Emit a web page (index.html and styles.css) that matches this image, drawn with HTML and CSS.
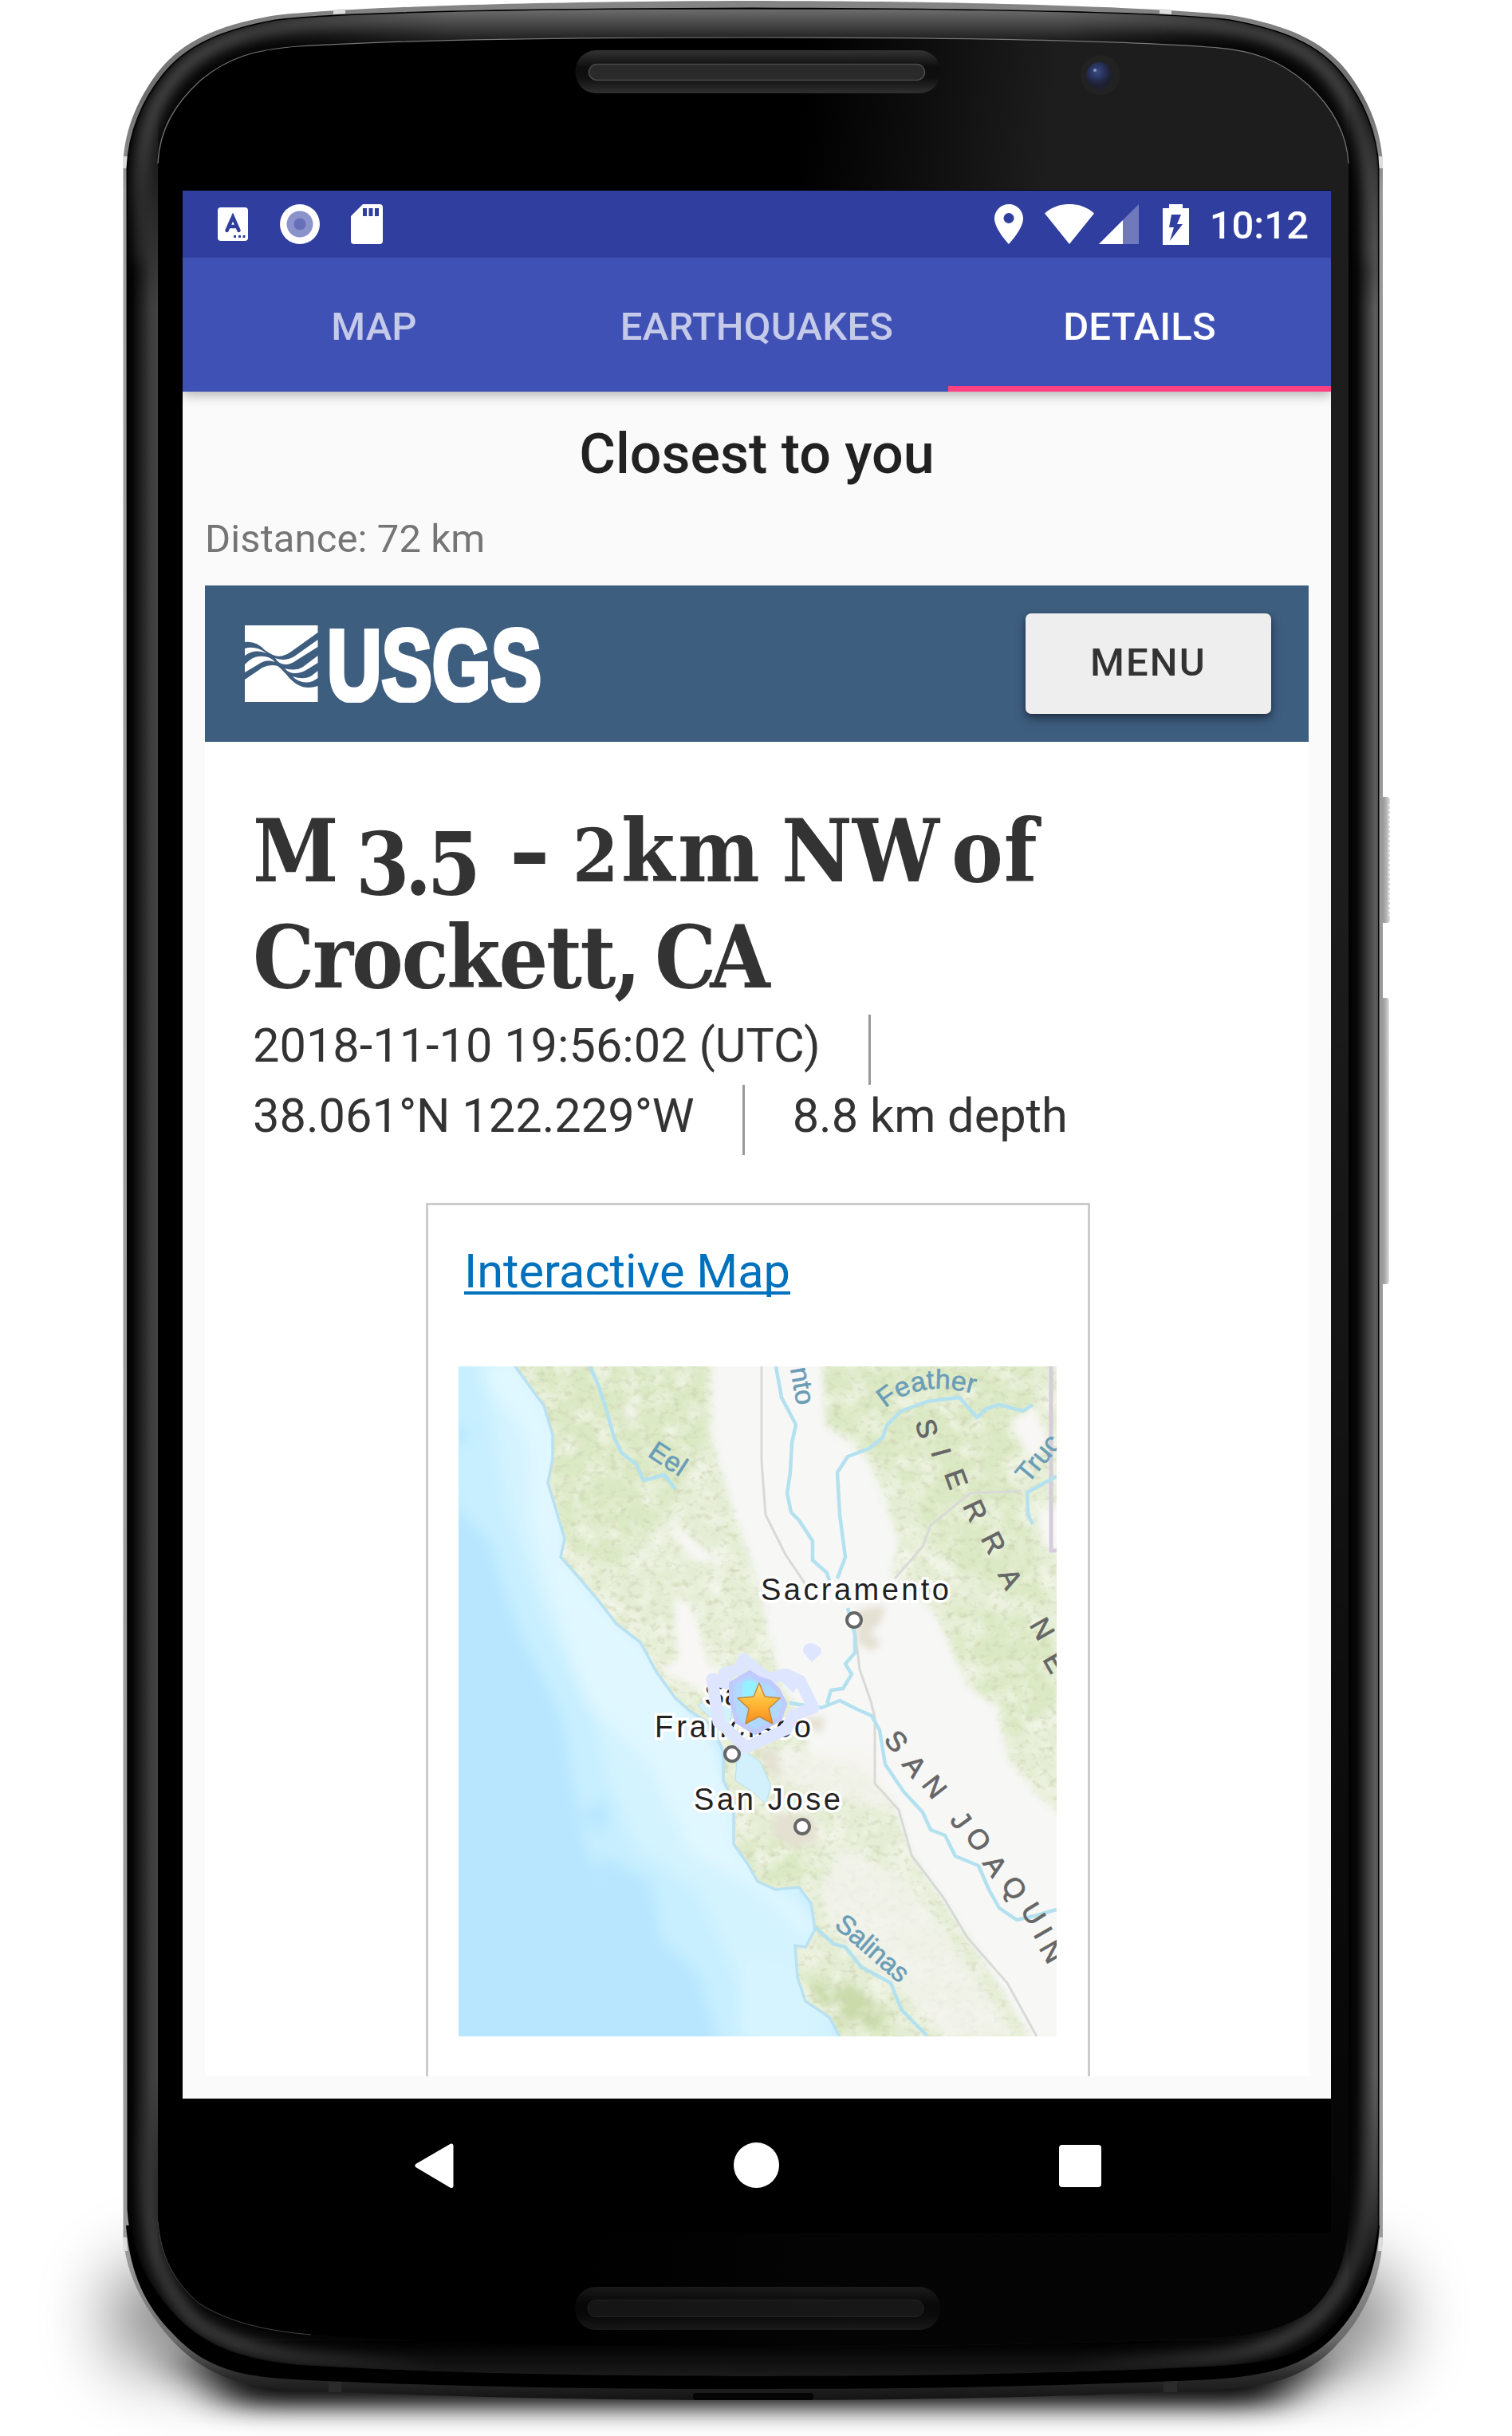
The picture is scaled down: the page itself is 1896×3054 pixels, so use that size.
FILE: index.html
```html
<!DOCTYPE html>
<html lang="en">
<head>
<meta charset="utf-8">
<title>Closest to you</title>
<link rel="stylesheet" href="styles.css">
</head>
<body>
<div class="stage">
  <svg class="device" viewBox="0 0 1896 3054" width="1896" height="3054" aria-hidden="true">
    <defs>
      <path id="shell" d="M154.500 205C156 160 175 120 200 88C230 50 275 32 340 20C400 12 600 2 944 1C1290 2 1490 12 1549 20C1613 32 1658 50 1688 88C1713 120 1732 160 1734 205V2805C1731 2860 1710 2905 1676 2940C1640 2980 1590 2993 1525 2996C1300 3007 1100 3009 944 3009C790 3009 590 3007 363 2996C300 2993 252 2975 212 2930C178 2890 158 2850 154.500 2805Z"/>
      <path id="bezel" d="M160 210C162 165 180 125 205 94C235 56 280 38 345 26C405 18 600 12 944 11C1290 12 1485 18 1543 26C1608 38 1654 56 1683 94C1708 125 1726 165 1728 210V2790C1722 2850 1700 2890 1665 2925C1630 2957 1580 2964 1510 2967C1300 2977 1100 2979 944 2979C790 2979 590 2977 376 2965C310 2959 262 2945 222 2905C186 2866 165 2830 161 2770Z"/>
      <path id="glass" d="M198 205C200 160 222 128 250 102C285 72 320 62 375 58C500 50 700 47 944 47C1190 47 1390 50 1515 59C1570 62 1605 75 1640 106C1668 132 1689 165 1691 205V2790C1687 2845 1665 2880 1640 2900C1600 2925 1560 2930 1500 2932C1300 2940 1100 2942 944 2942C790 2942 580 2940 390 2927C330 2922 285 2910 250 2888C218 2860 202 2830 198 2785Z"/>
      <clipPath id="bezelClip"><use href="#bezel"/></clipPath>
      <linearGradient id="rim" x1="0" y1="0" x2="0" y2="1">
        <stop offset="0" stop-color="#858585"/><stop offset=".04" stop-color="#6e6e6e"/><stop offset=".08" stop-color="#9a9a9a"/>
        <stop offset=".94" stop-color="#9a9a9a"/><stop offset=".975" stop-color="#6a6a6a"/><stop offset=".99" stop-color="#2a2a2a"/><stop offset="1" stop-color="#141414"/>
      </linearGradient>
      <linearGradient id="leftEdge"><stop offset="0" stop-color="#000"/><stop offset=".15" stop-color="#050505"/><stop offset=".75" stop-color="#3c3c3c"/><stop offset="1" stop-color="#434343"/></linearGradient>
      <linearGradient id="rightEdge"><stop offset="0" stop-color="#000"/><stop offset=".3" stop-color="#0a0a0a"/><stop offset=".9" stop-color="#5e5e5e"/><stop offset="1" stop-color="#555"/></linearGradient>
      <linearGradient id="topEdge" x1="0" y1="0" x2="0" y2="1"><stop offset="0" stop-color="#6c6c6c"/><stop offset="1" stop-color="#060606"/></linearGradient>
      <linearGradient id="bottomEdge" x1="0" y1="0" x2="0" y2="1"><stop offset="0" stop-color="#000"/><stop offset="1" stop-color="#1b1b1b"/></linearGradient>
      <linearGradient id="endFade" gradientUnits="userSpaceOnUse" x1="0" y1="110" x2="0" y2="2880"><stop offset="0" stop-color="#000"/><stop offset=".1" stop-color="#fff"/><stop offset=".9" stop-color="#fff"/><stop offset="1" stop-color="#000"/></linearGradient>
      <linearGradient id="sideFade" gradientUnits="userSpaceOnUse" x1="300" y1="0" x2="1590" y2="0"><stop offset="0" stop-color="#000"/><stop offset=".2" stop-color="#fff"/><stop offset=".8" stop-color="#fff"/><stop offset="1" stop-color="#000"/></linearGradient>
      <mask id="endMask" maskUnits="userSpaceOnUse" x="0" y="0" width="1896" height="3054"><rect width="1896" height="3054" fill="url(#endFade)"/></mask>
      <mask id="sideMask" maskUnits="userSpaceOnUse" x="0" y="0" width="1896" height="3054"><rect width="1896" height="3054" fill="url(#sideFade)"/></mask>
      <linearGradient id="sheen" gradientUnits="userSpaceOnUse" x1="1020" y1="0" x2="1330" y2="30"><stop offset="0" stop-color="#000"/><stop offset="1" stop-color="#1d1d1d"/></linearGradient>
      <linearGradient id="fade" x1="0" y1="0" x2="0" y2="1"><stop offset=".35" stop-color="#000" stop-opacity="0"/><stop offset=".95" stop-color="#000" stop-opacity=".85"/></linearGradient>
      <linearGradient id="slot" x1="0" y1="0" x2="0" y2="1"><stop offset="0" stop-color="#333"/><stop offset=".4" stop-color="#0d0d0d"/><stop offset=".65" stop-color="#101010"/><stop offset="1" stop-color="#303030"/></linearGradient>
      <linearGradient id="button"><stop offset="0" stop-color="#8a8a8a"/><stop offset=".6" stop-color="#b5b5b5"/><stop offset="1" stop-color="#e0e0e0"/></linearGradient>
      <radialGradient id="lens" cx=".4" cy=".35"><stop offset="0" stop-color="#3d4d80"/><stop offset=".5" stop-color="#283460"/><stop offset="1" stop-color="#1e2030"/></radialGradient>
      <filter id="soft" filterUnits="userSpaceOnUse" x="100" y="-50" width="1700" height="3100"><feGaussianBlur stdDeviation="9"/></filter>
      <filter id="castWide" x="-20%" y="-90%" width="140%" height="280%"><feGaussianBlur stdDeviation="46 48"/></filter>
      <filter id="castTight" x="-20%" y="-200%" width="140%" height="500%"><feGaussianBlur stdDeviation="34 15"/></filter>
    </defs>
    <rect x="140" y="2850" width="1610" height="110" rx="50" fill="#000" opacity=".58" filter="url(#castWide)"/>
    <path d="M230 2950H1660L1600 3018H290Z" fill="#000" opacity=".95" filter="url(#castTight)"/>
    <rect x="1732" y="999" width="11" height="158" rx="4" fill="url(#button)"/>
    <path d="M1743 1008V1148" stroke="#fff" stroke-width="3" stroke-dasharray="3 3"/>
    <rect x="1732" y="1251" width="10" height="359" rx="4" fill="url(#button)"/>
    <use href="#shell" fill="url(#rim)"/>
    <path d="M418 12l15-1v6l-15 1zM1454 11l15 1v6l-15-1zM154 196h6v15h-6zM1729 196h5v15h-5zM154 2805h5l1 17h-5zM1729 2805h5l-1 17h-5z" fill="#ddd"/>
    <path d="M412 2983h16v16h-16zM1459 2983h17v16h-17z" fill="#2b2b2b"/>
    <path d="M158 2790C163 2850 182 2890 216 2925C258 2970 300 2979 366 2983C590 2994 790 2995 944 2995C1100 2995 1300 2993 1522 2983C1590 2978 1635 2968 1674 2928C1706 2895 1726 2850 1730 2790Z" fill="#000"/>
    <rect x="869" y="3000" width="151" height="9" rx="4" fill="#050505"/>
    <use href="#bezel" fill="#050505" stroke="#000" stroke-width="3"/>
    <g clip-path="url(#bezelClip)">
      <path d="M174 330V250C174 160 200 110 240 76C280 45 330 34 400 28C600 18 1290 18 1490 28C1560 34 1610 45 1650 76C1690 110 1714 160 1717 250V330" fill="none" stroke="#6a6a6a" stroke-width="12" filter="url(#soft)"/>
      <path d="M182 2600V2700C184 2830 210 2880 250 2915C290 2940 330 2950 400 2957L560 2968M1330 2968L1490 2957C1560 2954 1610 2940 1650 2906C1695 2860 1712 2820 1716 2700V2600" fill="none" stroke="#555" stroke-width="13" filter="url(#soft)"/>
      <g mask="url(#endMask)">
        <rect x="160" y="100" width="38" height="2780" fill="url(#leftEdge)"/>
        <rect x="1691" y="100" width="37" height="2780" fill="url(#rightEdge)"/>
      </g>
      <g mask="url(#sideMask)">
        <rect x="300" y="12" width="1290" height="50" fill="url(#topEdge)"/>
        <rect x="300" y="2935" width="1290" height="44" fill="url(#bottomEdge)"/>
      </g>
    </g>
    <use href="#glass" fill="url(#sheen)"/>
    <use href="#glass" fill="url(#fade)"/>
    <path d="M198 205C200 160 222 128 250 102C285 72 320 62 375 58C500 50 700 47 944 47C1190 47 1390 50 1515 59C1570 62 1605 75 1640 106C1668 132 1689 165 1691 205" fill="none" stroke="#777" stroke-width="1.200"/>
    <path d="M198 2785C202 2830 218 2860 250 2888C285 2910 330 2922 390 2927" fill="none" stroke="#444"/>
    <rect x="721.500" y="63" width="457.500" height="54" rx="26" fill="url(#slot)"/>
    <rect x="738.500" y="80.500" width="421" height="20" rx="10" fill="#2a2a2a" stroke="#4a4a4a" stroke-width="1.500"/>
    <g opacity=".5">
      <rect x="721" y="2867" width="458" height="54" rx="26" fill="url(#slot)"/>
      <rect x="737" y="2883.500" width="421" height="21" rx="10" fill="#2a2a2a" stroke="#444"/>
    </g>
    <circle cx="1380" cy="94" r="25" fill="#222"/>
    <circle cx="1379" cy="95" r="17" fill="url(#lens)"/>
    <circle cx="1373" cy="88" r="2" fill="#8593c0"/>
  </svg>

  <main class="screen">
    <div class="status-bar">
      <div class="status-group">
        <svg class="ic-keyboard" viewBox="0 0 38 42"><rect width="38" height="42" rx="4" fill="#fff"/><path d="M11.500 29L19 12L26.500 29M14.500 24H23.500" fill="none" stroke="#303f9f" stroke-width="4.500" stroke-linecap="round"/><path d="M20 35h3v3h-3zM26 35h3v3h-3zM31.500 35h3v3h-3z" fill="#303f9f"/></svg>
        <svg class="ic-sync" viewBox="0 0 50 50"><circle cx="25" cy="25" r="25" fill="#fff"/><circle cx="25" cy="25" r="16.500" fill="#8b93cb"/><circle cx="25" cy="25" r="7.500" fill="#666fb7"/></svg>
        <svg class="ic-card" viewBox="0 0 40 50"><path d="M15 0H36Q40 0 40 4V46Q40 50 36 50H4Q0 50 0 46V15Z" fill="#fff"/><path d="M15 5h5v10h-5zM22.500 5h5v10h-5zM30 5h5v10h-5z" fill="#303f9f"/></svg>
      </div>
      <div class="status-group status-right">
        <svg class="ic-pin" viewBox="0 0 36 50"><path fill="#fff" fill-rule="evenodd" d="M18 0C8 0 0 8 0 18C0 31 18 50 18 50S36 31 36 18C36 8 28 0 18 0ZM18 24A6.500 6.500 0 1 1 18 11A6.500 6.500 0 0 1 18 24Z"/></svg>
        <svg class="ic-wifi" viewBox="0 0 62 50"><path fill="#fff" d="M31 50L0 11.500C17-4 45-4 62 11.500Z"/></svg>
        <svg class="ic-signal" viewBox="0 0 50 50"><path d="M0 50L50 0V50Z" fill="#7179bd"/><path d="M0 50L30 20V50Z" fill="#fff"/></svg>
        <svg class="ic-battery" viewBox="0 0 33 51"><path fill="#fff" d="M8 0H25V5H33V51H0V5H8Z"/><path fill="#303f9f" d="M11 13H23L18 25H25L9 46L14 29H8Z"/></svg>
        <span class="clock">10:12</span>
      </div>
    </div>
    <nav class="tabs">
      <span class="tab">MAP</span>
      <span class="tab">EARTHQUAKES</span>
      <span class="tab active">DETAILS</span>
    </nav>
    <section class="content">
      <h2 class="title">Closest to you</h2>
      <p class="distance">Distance: 72 km</p>
      <div class="web">
        <header class="web-header">
          <svg class="logo" viewBox="0 0 372 98" role="img">
            <g fill="#fff">
              <path d="M0 1H91.500V10L58 34Q45 43 35 38Q29 35 25 32Q14 20 0 22Z"/>
              <path d="M0 30Q14 26 27 36Q13 30 0 39Z"/>
              <path d="M0 50Q10 40 17 40Q30 38 38 47Q28 43 20 48L0 60Z"/>
              <path d="M0 69L22 54Q32 49 41 52C52 59 60 79 80 79Q86 79 91.500 77V97H0Z"/>
              <path d="M91.500 19L62 40Q50 47 38 42Q43 50 51 50Q58 50 66 44L91.500 28Z"/>
              <path d="M91.500 39L73 53Q64 59 50 55Q55 61 63 61Q70 61 77 57L91.500 48Z"/>
              <path d="M91.500 58L84 64Q74 70 60 65Q66 72 76 72.500Q84 73 91.500 67Z"/>
            </g>
            <text x="103" y="95" class="logo-text" textLength="269" lengthAdjust="spacingAndGlyphs">USGS</text>
          </svg>
          <button class="menu">MENU</button>
        </header>
        <h1 class="quake"><span class="w1">M</span><span class="w2">3.5</span><span class="w3">-</span><span class="w4"><span class="small">2</span>km</span><span class="w5">NW</span><span class="w6">of</span><br><span class="w7">Crockett,</span><span class="w8">CA</span></h1>
        <ul class="meta">
          <li>2018-11-10 19:56:02 (UTC)</li>
          <li>38.061°N 122.229°W</li>
          <li>8.8 km depth</li>
        </ul>
        <div class="card">
          <a class="map-link">Interactive Map</a>
          <svg class="map" viewBox="0 0 750 840">
            <defs>
              <path id="land" d="M68-4L92 29L107 49L118 86V116L112 146L122 179L133 216L128 239L152 266L175 293L198 323L228 346L248 383L272 416L290 432L318 450L332 483V519L345 546V599L362 623L375 646L398 656L427 653L442 673L447 706L435 728L422 726L425 766L435 796L465 816L480 844H756V-4Z"/>
              <clipPath id="landClip"><use href="#land"/></clipPath>
              <filter id="haze" x="-20%" y="-20%" width="140%" height="140%"><feGaussianBlur stdDeviation="9"/></filter>
              <filter id="haze2"><feGaussianBlur stdDeviation="5"/></filter>
              <filter id="relief" x="0" y="0" width="100%" height="100%"><feTurbulence type="fractalNoise" baseFrequency=".1 .13" numOctaves="3" seed="7"/><feColorMatrix values="0 0 0 0 .6  0 0 0 0 .64  0 0 0 0 .44  2.600 0 0 0 -1.350"/></filter>
              <filter id="pale" x="0" y="0" width="100%" height="100%"><feTurbulence type="fractalNoise" baseFrequency=".035 .035" numOctaves="3" seed="21"/><feColorMatrix values="0 0 0 0 .97  0 0 0 0 .97  0 0 0 0 .94  2 0 0 0 -.850"/></filter>
              <linearGradient id="starFill" x1="0" y1="0" x2="0" y2="1"><stop offset="0" stop-color="#ffe08a"/><stop offset=".45" stop-color="#ffbd3a"/><stop offset="1" stop-color="#f98a1c"/></linearGradient>
              <path id="featherPath" d="M535 53Q580 13 655 37"/>
            </defs>
            <rect width="750" height="840" fill="#b8e6ff"/>
            <g filter="url(#haze)">
              <path fill="#c8efff" d="M-20-20H150V300L330 520L480 740V860H330L300 760L255 720L240 640L175 650L150 560L130 440L80 340L60 290L40 220L-20 160Z"/>
              <path fill="#d3f3ff" d="M20-20H160V300L380 560L470 720V860H370L350 770L300 660L220 600L190 530L170 440L100 300L60 180L40 60Z"/>
              <path fill="#e0f7ff" d="M70-20L130 100V240L240 350L330 480L345 600L400 660L440 690V720L380 660L290 610L240 500L160 420L120 300L90 200L85 90L30 10Z"/>
              <path fill="#b8e6ff" d="M-20 70L20 82L-20 110ZM150 560L190 540L185 590ZM180 610L245 650L220 670L170 640Z"/>
              <path fill="#d6f4ff" d="M360 740L440 760V840H350Z"/>
            </g>
            <use href="#land" fill="#e5eed5"/>
            <g clip-path="url(#landClip)">
              <g filter="url(#haze2)">
                <path fill="#dce9c5" d="M70 0H310V90L260 180L200 250L140 230ZM450 0H720V70L690 130L740 300L650 280L600 230L560 150L500 90L460 70ZM430 760L470 765L545 810V840H470ZM350 600L420 590L460 640L380 650ZM620 300L750 320V420L690 470L620 380Z"/>
                <path fill="#cbdcab" d="M440 776L480 768L530 800V830L480 825Z"/>
              </g>
              <rect width="750" height="840" filter="url(#pale)" opacity=".7"/>
              <rect width="750" height="840" filter="url(#relief)" opacity=".8"/>
              <g filter="url(#haze2)">
                <path fill="#f7f7f6" d="M318-10H456L460 75L484 90L515 119L535 173L552 219L542 260L595 306L618 353L640 403L675 426L688 490L722 533L760 566V850H722L645 723L568 613L542 540L500 500L440 490L430 440L405 400L372 260L335 150L318 86Z"/>
                <path fill="#f8f7f5" d="M205 45l18 10-6 20zM260 190l50 40 20 20-40-8zM270 290l20 5 25 80-40 5zM725 185L760 170V235L735 228ZM690 70l30-20 20 40-20 30zM250 380l40-20 40 20-20 30z"/>
                <path fill="#f5f4ef" opacity=".7" d="M480 600L560 640L700 840H610L560 790L480 720L450 660ZM400 480L520 480L545 560L470 540L400 520Z"/>
              </g>
              <g fill="#e4e0d2" filter="url(#haze2)"><path d="M500 305l35-5-5 20-15 15 15 10-10 12-20-10zM395 560l50 5 5 30-30 8-25-15zM375 480l20 0 10 30-10 5zM410 440l50 0-5 20z"/></g>
              <path d="M332 480V519L345 546L352 560" fill="none" stroke="#b5dce8" stroke-width="3"/>
            </g>
            <path fill="#d3f1fc" stroke="#b5e0ee" d="M350 480L362 484L378 496L392 526L385 548L368 533L347 519L349 495ZM300 425L330 405L345 420L340 450L320 445Z"/>
            <use href="#land" fill="none" stroke="#b9e1f2" stroke-width="3.500"/>
            <g fill="none" stroke="#d9d9d8" stroke-width="3">
              <path d="M380 0V119L385 186L410 236L435 273M497 330L503 380L517 420L522 440V523L552 556L568 613L608 666L638 716L688 773L725 840"/>
              <path d="M547 266L582 226L592 199L642 159L705 156"/>
            </g>
            <path d="M743 0V231H752" fill="none" stroke="#d6cbdc" stroke-width="5"/>
            <g fill="none" stroke="#b3e1ef" stroke-width="4.500" stroke-linejoin="round">
              <path d="M398 0L405 39L423 73L418 96L416 133L412 159L417 183L427 193L444 219V243L462 259L465 269M475 266L485 239L478 186L475 133L488 113L515 103L532 89L537 74L555 56L588 44L628 39L650 64L662 53L678 48L708 56L720 48"/>
              <path d="M488 303L497 336V359L485 373L493 386L482 404L467 406L462 423M415 422L455 428L478 419L500 430L518 438L528 456L535 499L558 533L582 559L592 581L610 588L623 614L652 626L665 656L678 679L700 694L722 689L750 681"/>
              <path d="M447 703L470 724L485 728L505 753L542 773L555 806L588 840M165 0L175 23L185 53L195 89L205 109L223 123L232 143L258 136L272 154M750 138L735 146L713 158L714 186L720 198"/>
            </g>
            <g class="river-name">
              <text transform="translate(236 112) rotate(33)">Eel</text>
              <text transform="translate(416 3) rotate(80)">nto</text>
              <text><textPath href="#featherPath" textLength="118">Feather</textPath></text>
              <text transform="translate(714 148) rotate(-50)">Truc</text>
              <text transform="translate(470 702) rotate(41)" textLength="110">Salinas</text>
            </g>
            <g class="region-name">
              <text transform="translate(587 78) rotate(75)" dy="12">S</text><text transform="translate(605 108) rotate(75)" dy="12">I</text><text transform="translate(624 141) rotate(70)" dy="12">E</text><text transform="translate(648 181) rotate(65)" dy="12">R</text><text transform="translate(671 221) rotate(63)" dy="12">R</text><text transform="translate(692 266) rotate(63)" dy="12">A</text><text transform="translate(732 329) rotate(60)" dy="12">N</text><text transform="translate(748 371) rotate(60)" dy="12">E</text>
              <text transform="translate(549 470) rotate(50)" dy="12">S</text><text transform="translate(572 501) rotate(52)" dy="12">A</text><text transform="translate(597 527) rotate(52)" dy="12">N</text><text transform="translate(630 569) rotate(54)" dy="12">J</text><text transform="translate(652 593) rotate(54)" dy="12">O</text><text transform="translate(673 626) rotate(56)" dy="12">A</text><text transform="translate(697 654) rotate(56)" dy="12">Q</text><text transform="translate(721 686) rotate(58)" dy="12">U</text><text transform="translate(733 710) rotate(60)" dy="12">I</text><text transform="translate(744 734) rotate(60)" dy="12">N</text>
            </g>
            <g class="city">
              <text x="379" y="293" textLength="236">Sacramento</text>
              <text x="308" y="425" textLength="68">San</text>
              <text x="246" y="465" textLength="196">Francisco</text>
              <text x="295" y="556" textLength="184">San Jose</text>
            </g>
            <g fill="#fff" stroke="#666" stroke-width="4"><circle cx="496" cy="318" r="9"/><circle cx="343" cy="486" r="9"/><circle cx="431" cy="577" r="9"/></g>
            <path d="M358 367L352 380L334 384L338 398L318 392L326 446L338 456L360 478L411 455L420 437L445 428L428 394L410 386L388 392Z" fill="none" stroke="#dee5ff" stroke-width="15" stroke-linejoin="round"/>
            <path d="M404 394L428 392L420 410Z" fill="#dee5ff"/>
            <path d="M443 347Q455 350 455 359L443 371L432 358Q432 347 443 347Z" fill="#dee5ff"/>
            <path d="M365 384L342 398V417L349 445L372 459L403 442L409 423L400 405L390 396L375 391Z" fill="#b0d9ff" stroke="#bfcaff" stroke-width="6"/>
            <path d="M357 397Q365 390 375 398L372 412L355 416Z" fill="#95f1ff"/>
            <path d="M377 397L384 414L403 416L389 429L394 448L377 439L360 448L364 429L350 416L370 414Z" fill="url(#starFill)" stroke="#c58a38" stroke-width="1.500" stroke-linejoin="round"/>
          </svg>
        </div>
      </div>
    </section>
    <div class="nav-bar">
      <svg viewBox="0 0 1440 168" width="1440" height="168"><path d="M294 84L337 59V109.500Z" fill="#fff" stroke="#fff" stroke-width="5" stroke-linejoin="round"/><circle cx="719.500" cy="83.500" r="28.500" fill="#fff"/><rect x="1099" y="58" width="53" height="53" rx="4" fill="#fff"/></svg>
    </div>
  </main>
</div>
</body>
</html>
```
FILE: styles.css
```css
* { box-sizing: border-box; }
body { margin: 0; background: #fff; font-family: Roboto, "Noto Sans", sans-serif; }
h1, h2, p, ul { margin: 0; padding: 0; }
.stage { position: relative; width: 1896px; height: 3054px; padding: 239px 0 0 229px; overflow: hidden; }
.device { position: absolute; left: 0; top: 0; display: block; }
.screen { position: relative; width: 1440px; height: 2560px; display: flex; flex-direction: column; background: #fafafa; box-shadow: 0 -1px #000; }

.status-bar { height: 84px; background: #303f9f; display: flex; justify-content: space-between; align-items: center; padding: 0 28px 0 44px; }
.status-group { display: flex; align-items: center; }
.status-group svg { display: block; flex: none; }
.ic-keyboard { width: 38px; height: 42px; margin-right: 40px; }
.ic-sync { width: 50px; height: 50px; margin-right: 39px; }
.ic-card { width: 40px; height: 50px; }
.ic-pin { width: 36px; height: 50px; margin-right: 27px; }
.ic-wifi { width: 62px; height: 50px; margin-right: 6px; }
.ic-signal { width: 50px; height: 50px; margin-right: 30px; }
.ic-battery { width: 33px; height: 51px; margin-right: 26px; }
.clock { color: #fff; font-size: 49px; font-weight: 500; line-height: 58px; padding-top: 4px; }

.tabs { height: 168px; background: #3f51b5; display: grid; grid-template-columns: repeat(3, 1fr); position: relative; box-shadow: 0 4px 14px rgba(0, 0, 0, .3); clip-path: inset(0 0 -24px 0); }
.tab { display: flex; align-items: center; justify-content: center; padding-top: 4px; font-size: 49px; font-weight: 500; letter-spacing: .2px; color: #c5cae9; }
.tab.active { color: #fff; box-shadow: inset 0 -7px #ff4081; }

.content { height: 2140px; padding: 36px 28px 28px; display: flex; flex-direction: column; }
.title { font-size: 70px; font-weight: 500; line-height: 84px; text-align: center; color: #212121; }
.distance { margin-top: 36px; font-size: 49px; line-height: 58px; letter-spacing: .1px; color: #757575; }
.web { margin-top: 29px; height: 1869px; background: #fff; overflow: hidden; color: #333; }
.web-header { height: 196px; background: #3e5e80; display: flex; align-items: center; justify-content: space-between; padding: 0 47px 0 50px; }
.logo { width: 372px; height: 98px; display: block; }
.logo-text { font: bold 127px "Liberation Sans", Arial, sans-serif; fill: #fff; stroke: #fff; stroke-width: 6px; }
.menu { width: 308px; height: 126px; border: 0; border-radius: 7px; background: #eee; color: #333; font: 500 49px/58px Roboto, sans-serif; letter-spacing: 2.1px; padding: 0 0 3px; box-shadow: 0 7px 14px rgba(0, 0, 0, .35), 0 2px 6px rgba(0, 0, 0, .25); }

.quake { padding: 71px 0 0 60px; height: 337px; font: bold 108px/133px "DejaVu Serif Condensed", "DejaVu Serif", serif; white-space: nowrap; }
.quake > span { display: inline-block; height: 133px; vertical-align: top; }
.w1 { width: 129px; }
.w2 { width: 192px; letter-spacing: -6px; padding-top: 16px; }
.w3 { width: 80px; transform: scaleX(1.3); transform-origin: 0 50%; }
.w4 { width: 262px; letter-spacing: 3.5px; }
.w5 { width: 213px; }
.w6 { letter-spacing: 1px; }
.w7 { width: 504px; letter-spacing: -2.3px; }
.w8 { letter-spacing: -8px; }
.small { font-size: 92px; line-height: 1px; }

.meta { list-style: none; width: 1264px; margin: 5px 0 0 60px; display: flex; flex-wrap: wrap; font-size: 59.5px; line-height: 78px; }
.meta li { height: 88px; padding-right: 60px; border-right: 3.500px solid #999; margin-right: 60px; }
.meta li:first-child { margin-right: 300px; }
.meta li:last-child { border: 0; padding: 0; margin: 0; }

.card { width: 833px; height: 1200px; margin: 60px 0 0 277px; border: 3.500px solid #ccc; padding: 43px 38px; }
.map-link { display: block; width: max-content; margin-left: 7px; font-size: 59.5px; line-height: 80px; color: #0071bc; text-decoration: underline; text-decoration-thickness: 3.500px; text-underline-offset: 5px; text-decoration-skip-ink: none; }
.map { display: block; width: 750px; height: 840px; margin-top: 79px; }
.city { font: 38px "Liberation Sans", Arial, sans-serif; fill: #222; stroke: #fff; stroke-width: 7px; paint-order: stroke; }
.river-name { font: 34px "Liberation Sans", Arial, sans-serif; fill: #6a9db6; stroke: #6a9db6; stroke-width: .6px; }
.region-name { font: 35px "Liberation Sans", Arial, sans-serif; fill: #666; stroke: #666; stroke-width: .8px; text-anchor: middle; }

.nav-bar { height: 168px; background: #000; }
.nav-bar svg { display: block; }
```
